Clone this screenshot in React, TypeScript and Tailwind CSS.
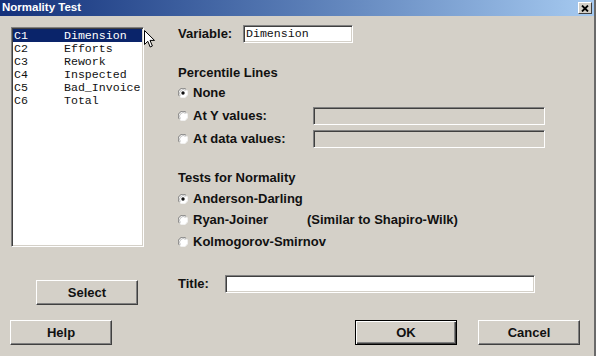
import React from "react";

const sans = "font-['Liberation_Sans',Arial,sans-serif]";
const mono = "font-['Liberation_Mono','Courier_New',monospace]";

const columns = [
  ["C1", "Dimension"],
  ["C2", "Efforts"],
  ["C3", "Rework"],
  ["C4", "Inspected"],
  ["C5", "Bad_Invoice"],
  ["C6", "Total"],
];

function Radio({ checked }: { checked?: boolean }) {
  return (
    <svg width="10" height="10" viewBox="0 0 10 10" className="shrink-0">
      <circle cx="5" cy="5" r="4.5" fill="#fff" />
      <path d="M1.6 8.4 A4.8 4.8 0 0 1 8.4 1.6" fill="none" stroke="#808080" strokeWidth="1" />
      <path d="M8.4 1.6 A4.8 4.8 0 0 1 1.6 8.4" fill="none" stroke="#f4f4f4" strokeWidth="1" />
      <path d="M2.4 7.6 A3.7 3.7 0 0 1 7.6 2.4" fill="none" stroke="#b0b0b0" strokeWidth="0.8" />
      {checked && <circle cx="5" cy="5" r="1.7" fill="#111" />}
    </svg>
  );
}

function Sunken({ className, children }: { className: string; children?: React.ReactNode }) {
  return (
    <div
      className={
        "border border-t-[#808080] border-l-[#808080] border-b-white border-r-white shadow-[inset_1px_1px_0_#404040,inset_-1px_-1px_0_#d4d0c8] " +
        className
      }
    >
      {children}
    </div>
  );
}

function Button({ label, className, isDefault }: { label: string; className: string; isDefault?: boolean }) {
  return (
    <div
      className={
        (isDefault
          ? "border border-black shadow-[inset_1px_1px_0_#fff,inset_-1px_-1px_0_#404040,inset_-2px_-2px_0_#808080] "
          : "border border-t-white border-l-white border-b-[#404040] border-r-[#404040] shadow-[inset_-1px_-1px_0_#808080] ") +
        "w-[102px] h-[25px] flex items-center justify-center text-[13px] font-bold text-[#111] " +
        className
      }
    >
      {label}
    </div>
  );
}

function RadioRow({ label, checked, className }: { label: string; checked?: boolean; className: string }) {
  return (
    <div className={"flex items-center h-[16px] gap-[5px] " + className}>
      <Radio checked={checked} />
      <span>{label}</span>
    </div>
  );
}

export default function App() {
  return (
    <div className={"relative w-[596px] h-[356px] bg-[#d4d0c8] border-r-2 border-r-[#6a6a6a] flex flex-col overflow-hidden text-[#111] " + sans}>
      {/* title bar */}
      <div className="h-[16px] shrink-0 flex items-center justify-between pl-[2px] pr-[2px] bg-gradient-to-r from-[#14307a] to-[#a6caf0]">
        <span className="text-white font-bold text-[11.5px] leading-none">Normality Test</span>
        <div className="w-[14px] h-[12px] bg-[#d4d0c8] border border-t-white border-l-white border-b-[#404040] border-r-[#404040] flex items-center justify-center">
          <svg width="8" height="7" viewBox="0 0 8 7">
            <path d="M1 0.5 L7 6.5 M7 0.5 L1 6.5" stroke="#000" strokeWidth="1.8" />
          </svg>
        </div>
      </div>

      <div className="flex">
        {/* left column */}
        <div className="pl-[11px] pt-[11px] flex flex-col">
          <Sunken className="w-[133px] h-[220px] bg-white overflow-hidden">
            <div className={"pt-[1px] pl-[1px] pr-[1px] text-[11.6px] " + mono}>
              {columns.map(([c, name], i) => (
                <div
                  key={c}
                  className={
                    "h-[13px] flex items-center whitespace-nowrap " +
                    (i === 0 ? "bg-[#0a246a] text-white" : "text-[#111]")
                  }
                >
                  <span className="w-[51px] pl-[1px] shrink-0">{c}</span>
                  <span>{name}</span>
                </div>
              ))}
            </div>
          </Sunken>
          <Button label="Select" className="mt-[33px] ml-[25px]" />
        </div>

        {/* right column */}
        <div className="ml-[34px] pt-[9px] flex flex-col text-[13px] font-bold">
          <div className="flex items-center h-[18px]">
            <span className="w-[65px]">Variable:</span>
            <Sunken className="w-[110px] h-[18px] bg-white flex items-center pl-[2px]">
              <span className={"text-[11.6px] font-normal " + mono}>Dimension</span>
            </Sunken>
          </div>

          <div className="mt-[22px] h-[16px] flex items-center">Percentile Lines</div>
          <RadioRow label="None" checked className="mt-[4px]" />
          <div className="mt-[6px] flex items-center h-[18px]">
            <div className="w-[135px] flex items-center gap-[5px]">
              <Radio />
              <span>At Y values:</span>
            </div>
            <Sunken className="w-[232px] h-[18px] bg-[#d4d0c8]" />
          </div>
          <div className="mt-[5px] flex items-center h-[18px]">
            <div className="w-[135px] flex items-center gap-[5px]">
              <Radio />
              <span>At data values:</span>
            </div>
            <Sunken className="w-[232px] h-[18px] bg-[#d4d0c8]" />
          </div>

          <div className="mt-[22px] h-[16px] flex items-center">Tests for Normality</div>
          <RadioRow label="Anderson-Darling" checked className="mt-[5px]" />
          <div className="mt-[5px] flex items-center h-[16px] gap-[5px]">
            <Radio />
            <span className="w-[109px]">Ryan-Joiner</span>
            <span>(Similar to Shapiro-Wilk)</span>
          </div>
          <RadioRow label="Kolmogorov-Smirnov" className="mt-[6px]" />

          <div className="mt-[25px] flex items-center h-[18px]">
            <span className="w-[47px]">Title:</span>
            <Sunken className="w-[310px] h-[18px] bg-white" />
          </div>
        </div>
      </div>

      {/* bottom buttons */}
      <div className="mt-[15px] flex pl-[10px] pr-[14px]">
        <Button label="Help" className="" />
        <div className="ml-auto flex gap-[21px]">
          <Button label="OK" isDefault className="" />
          <Button label="Cancel" className="" />
        </div>
      </div>

      {/* mouse pointer */}
      <svg width="12" height="19" viewBox="0 0 12 19" className="absolute left-[144px] top-[30px]">
        <path d="M0.5 0.5 L0.5 14.5 L3.8 11.3 L6.2 17 L8.4 16 L6 10.4 L10.5 10.4 Z" fill="#fff" stroke="#000" strokeWidth="1" strokeLinejoin="round" />
      </svg>
    </div>
  );
}
